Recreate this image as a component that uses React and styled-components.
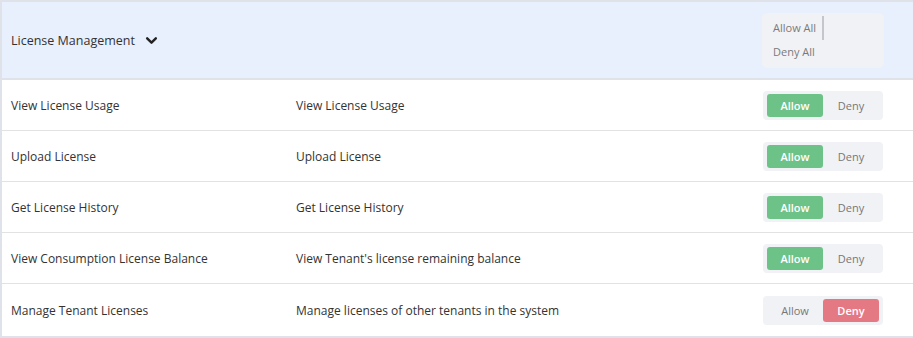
import styled, { createGlobalStyle } from "styled-components";

const GlobalStyle = createGlobalStyle`
  body {
    margin: 0;
    font-family: "Open Sans", "Noto Sans", sans-serif;
    background: #ffffff;
  }
`;

const permissions = [
  { name: "View License Usage", description: "View License Usage", allowed: true },
  { name: "Upload License", description: "Upload License", allowed: true },
  { name: "Get License History", description: "Get License History", allowed: true },
  {
    name: "View Consumption License Balance",
    description: "View Tenant's license remaining balance",
    allowed: true,
  },
  {
    name: "Manage Tenant Licenses",
    description: "Manage licenses of other tenants in the system",
    allowed: false,
  },
];

export default function App() {
  return (
    <>
      <GlobalStyle />
      <StyledTable>
        <StyledHeader>
          <StyledTitle>
            License Management
            <svg width="13" height="13" viewBox="0 0 24 24">
              <path
                d="M4 8l8 8 8-8"
                fill="none"
                stroke="#222"
                strokeWidth="4.5"
                strokeLinecap="round"
                strokeLinejoin="round"
              />
            </svg>
          </StyledTitle>
          <StyledBulkBox>
            <StyledBulkOption active>Allow All</StyledBulkOption>
            <StyledBulkOption>Deny All</StyledBulkOption>
          </StyledBulkBox>
        </StyledHeader>
        {permissions.map((permission) => (
          <StyledRow key={permission.name}>
            <StyledCell>{permission.name}</StyledCell>
            <StyledCell>{permission.description}</StyledCell>
            <StyledToggle>
              <StyledToggleButton selected={permission.allowed} variant="allow">
                Allow
              </StyledToggleButton>
              <StyledToggleButton selected={!permission.allowed} variant="deny">
                Deny
              </StyledToggleButton>
            </StyledToggle>
          </StyledRow>
        ))}
      </StyledTable>
    </>
  );
}

const StyledTable = styled.div`
  width: 913px;
  box-sizing: border-box;
  border-top: 2px solid #dfe2e8;
  border-left: 2px solid #dfe2e8;
  border-bottom: 2px solid #dfe2e8;
`;

const StyledHeader = styled.div`
  height: 76px;
  display: flex;
  align-items: center;
  justify-content: space-between;
  padding: 0 29px 0 9px;
  background-color: #e8effd;
  border-bottom: 2px solid #dfe2e8;
`;

const StyledTitle = styled.div`
  display: flex;
  align-items: center;
  gap: 10px;
  font-size: 12.5px;
  color: #333;
`;

const StyledBulkBox = styled.div`
  width: 122px;
  height: 55px;
  box-sizing: border-box;
  padding: 3px 11px;
  display: flex;
  flex-direction: column;
  justify-content: center;
  background-color: #f1f2f5;
  border-radius: 5px;
`;

const StyledBulkOption = styled.span`
  align-self: flex-start;
  font-size: 11px;
  color: #7a7a7a;
  line-height: 24px;
  padding-right: ${(props) => (props.active ? "6px" : "0")};
  border-right: ${(props) => (props.active ? "2px solid #c3c6cc" : "none")};
`;

const StyledRow = styled.div`
  height: 51px;
  box-sizing: border-box;
  display: grid;
  grid-template-columns: 285px 1fr 120px;
  align-items: center;
  padding: 0 30px 0 9px;
  border-bottom: 1px solid #e2e2e2;

  &:last-child {
    height: 52px;
    border-bottom: none;
  }
`;

const StyledCell = styled.div`
  font-size: 12px;
  color: #333;
`;

const StyledToggle = styled.div`
  height: 29px;
  box-sizing: border-box;
  padding: 3px 4px;
  display: flex;
  background-color: #f1f2f5;
  border-radius: 4px;
`;

const StyledToggleButton = styled.div`
  flex: 1;
  display: flex;
  align-items: center;
  justify-content: center;
  border-radius: 3px;
  font-size: 11px;
  font-weight: ${(props) => (props.selected ? 600 : 400)};
  color: ${(props) => (props.selected ? "#ffffff" : "#777")};
  background-color: ${(props) =>
    props.selected
      ? props.variant === "allow"
        ? "#6cc287"
        : "#e57983"
      : "transparent"};
`;
